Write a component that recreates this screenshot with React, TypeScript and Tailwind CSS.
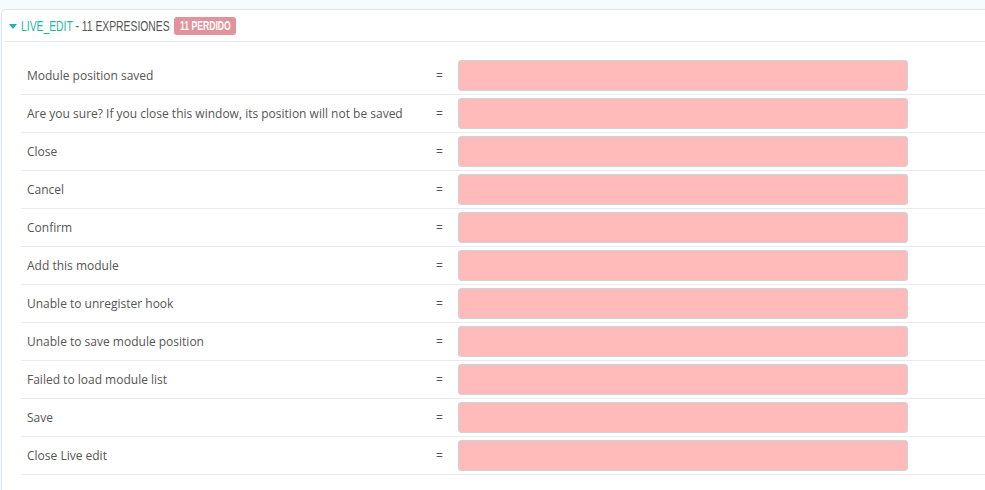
const rows = [
  'Module position saved',
  'Are you sure? If you close this window, its position will not be saved',
  'Close',
  'Cancel',
  'Confirm',
  'Add this module',
  'Unable to unregister hook',
  'Unable to save module position',
  'Failed to load module list',
  'Save',
  'Close Live edit',
]

export default function App() {
  return (
    <div className="w-[985px] h-[490px] overflow-hidden bg-[#f8fbfd] pt-[9px] pl-px font-['Open_Sans',sans-serif]">
      <div className="h-[520px] bg-white border border-r-0 border-[#dbe6ee] rounded-tl-[5px] pl-[3px]">
        {/* header, condensed look */}
        <div className="h-[32px] flex items-center border-b border-[#e6ebef] pl-1 pt-[1px] font-['Liberation_Sans',sans-serif] text-[15px] uppercase">
          <span className="shrink-0 w-0 h-0 border-l-[4px] border-r-[4px] border-t-[5px] border-l-transparent border-r-transparent border-t-[#1fb9a2] mr-[4px] mt-[1px]" />
          <span className="shrink-0 w-[153px] whitespace-nowrap">
            <span className="inline-block origin-left [transform:scaleX(0.69)]">
              <span className="text-[#1fb9a2]">LIVE_EDIT</span>
              <span className="text-[#555]"> - 11 expresiones</span>
            </span>
          </span>
          <span className="shrink-0 w-[62px] h-[18px] flex items-center justify-center bg-[#e0939a] rounded-[3px] overflow-hidden">
            <span className="inline-block [transform:scaleX(0.72)] text-white text-[12px] font-bold whitespace-nowrap">11 perdido</span>
          </span>
        </div>
        {/* table */}
        <div className="mt-[15px] ml-[16px]">
          {rows.map((r) => (
            <div key={r} className="h-[38px] flex items-center border-b border-[#e8ecef] text-[12px] text-[#555]">
              <div className="w-[400px] pl-[6px] whitespace-nowrap">{r}</div>
              <div className="w-[37px] text-center text-[12px] text-[#555]">=</div>
              <div className="w-[450px] h-[31px] bg-[#ffbaba] border border-[#c8d6dc] rounded-[3px]" />
            </div>
          ))}
        </div>
      </div>
    </div>
  )
}
